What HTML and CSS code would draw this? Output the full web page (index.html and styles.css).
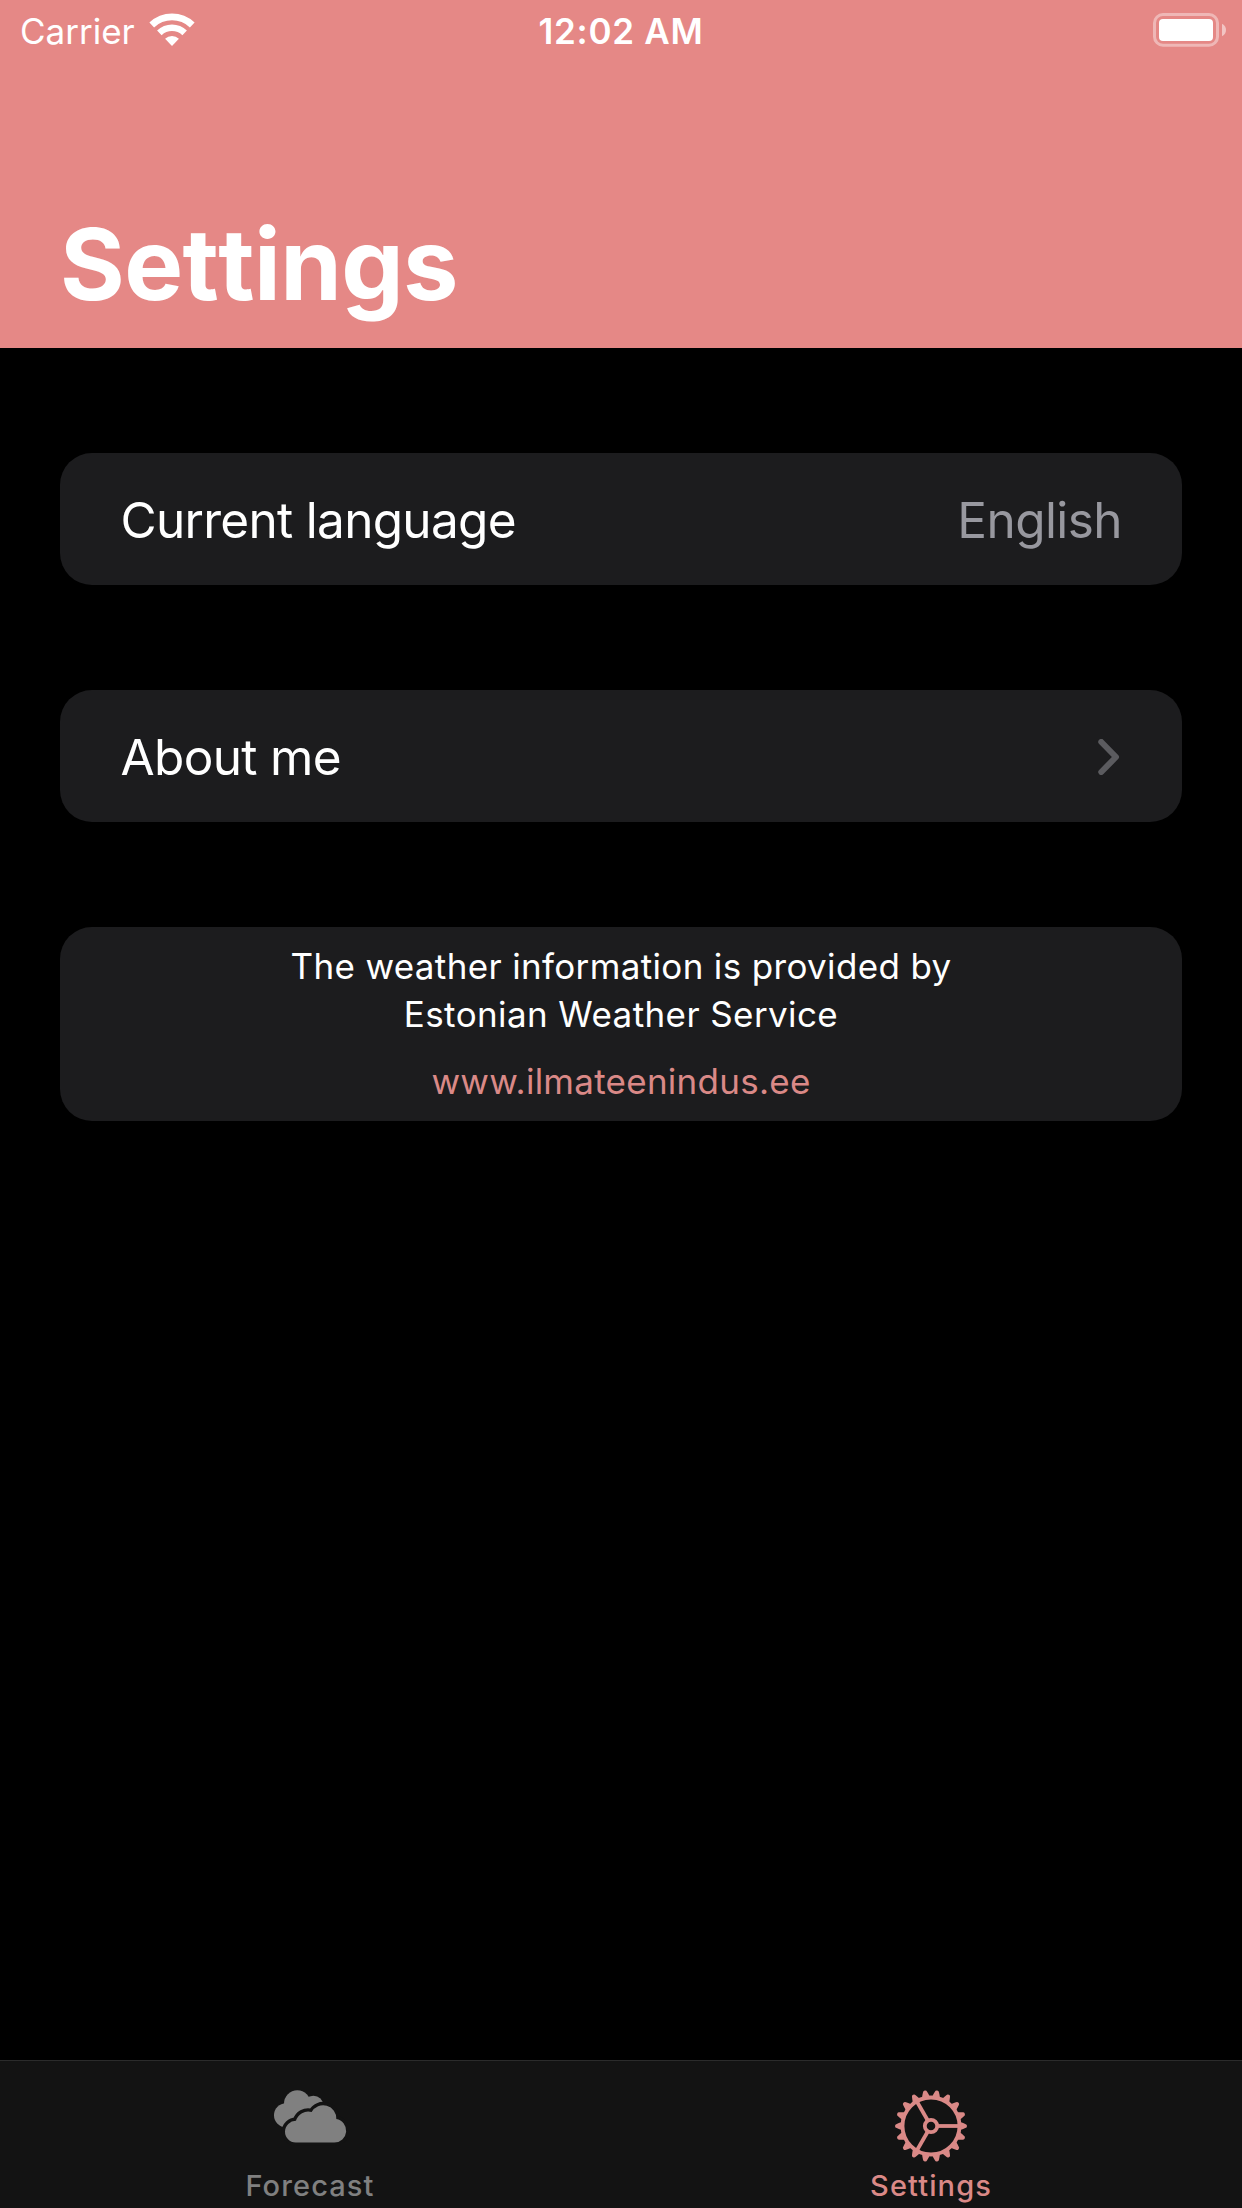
FILE: index.html
```
<!DOCTYPE html>
<html lang="en">
<head>
<meta charset="utf-8">
<title>Settings</title>
<link rel="stylesheet" href="styles.css">
</head>
<body>
<div class="screen">
  <header class="header">
    <div class="status">
      <div class="status-left">
        <span class="carrier">Carrier</span>
        <svg class="wifi" width="48" height="36" viewBox="-24 -34 48 36" fill="#fff">
          <path d="M0 0L-6.9 -7.2A10 10 0 0 1 6.9 -7.2Z"/>
          <path d="M-14.9 -15.5A21.5 21.5 0 0 1 14.9 -15.5L10.4 -10.8A15 15 0 0 0 -10.4 -10.8Z"/>
          <path d="M-22.6 -23.4A32.5 32.5 0 0 1 22.6 -23.4L17.9 -18.5A25.7 25.7 0 0 0 -17.9 -18.5Z"/>
        </svg>
      </div>
      <span class="time">12:02 AM</span>
      <div class="status-right">
        <svg class="battery" width="74" height="34" viewBox="0 0 74 34">
          <rect x="1.5" y="1.5" width="63" height="30.7" rx="8.5" fill="none" stroke="#fff" stroke-opacity=".4" stroke-width="3"/>
          <rect x="6" y="6" width="54" height="22" rx="4" fill="#fff"/>
          <path d="M69 10.7C72 12 73 14.5 73 17S72 22 69 23.3Z" fill="#fff" fill-opacity=".5"/>
        </svg>
      </div>
    </div>
    <h1 class="title">Settings</h1>
  </header>

  <main class="content">
    <section class="card row">
      <span class="label label-language">Current language</span>
      <span class="value">English</span>
    </section>
    <section class="card row">
      <span class="label">About me</span>
      <svg class="chevron" width="22" height="36" viewBox="0 0 22 36" fill="none" stroke="#5b5b5f" stroke-width="6" stroke-linecap="round" stroke-linejoin="round">
        <path d="M3.3 3L18 18L3.3 33"/>
      </svg>
    </section>
    <section class="card credit">
      <p class="credit-first">The weather information is provided by</p>
      <p class="credit-second">Estonian Weather Service</p>
      <a class="link">www.ilmateenindus.ee</a>
    </section>
  </main>

  <nav class="tabs">
    <div class="tab">
      <svg class="tab-icon" width="76" height="76" viewBox="126 115 228 228">
        <g fill="#808080">
          <circle cx="168" cy="197" r="36"/>
          <circle cx="202" cy="162" r="40"/>
          <circle cx="250" cy="168" r="30"/>
          <path d="M168 233L250 190V160H190Z"/>
        </g>
        <path fill="#131313" stroke="#131313" stroke-width="20" d="M197 278A32 32 0 0 1 198 213.500A38 38 0 0 1 245 187A39.500 39.500 0 0 1 319 208A35.500 35.500 0 0 1 313 278.500Z"/>
        <path fill="#808080" d="M197 278.500A32 32 0 0 1 198 213.500A38 38 0 0 1 245 187A39.500 39.500 0 0 1 319 208A35.500 35.500 0 0 1 313 278.500Z"/>
      </svg>
      <span class="tab-label">Forecast</span>
    </div>
    <div class="tab active">
      <svg class="tab-icon" width="76" height="76" viewBox="-38 -38 76 76" fill="none" stroke="#da8987" stroke-width="3.800">
        <defs>
          <path id="tooth" d="M28.500 -4.200Q33 -2.800 34.300 -2.100Q36 -1.800 36 0Q36 1.800 34.300 2.100Q33 2.800 28.500 4.200Z" fill="#da8987" stroke="none"/>
          <g id="teeth"><use href="#tooth"/><use href="#tooth" transform="rotate(20)"/><use href="#tooth" transform="rotate(40)"/></g>
        </defs>
        <use href="#teeth"/>
        <use href="#teeth" transform="rotate(60)"/>
        <use href="#teeth" transform="rotate(120)"/>
        <use href="#teeth" transform="rotate(180)"/>
        <use href="#teeth" transform="rotate(240)"/>
        <use href="#teeth" transform="rotate(300)"/>
        <circle r="28.500"/>
        <circle r="6.200"/>
        <path d="M7 0H28"/>
        <path d="M7 0H28" transform="rotate(120)"/>
        <path d="M7 0H28" transform="rotate(240)"/>
      </svg>
      <span class="tab-label">Settings</span>
    </div>
  </nav>
</div>
</body>
</html>
```
FILE: styles.css
```
* { box-sizing: border-box; }

body {
  margin: 0;
  background: #000;
  color: #fff;
  font-family: Inter, "Liberation Sans", sans-serif;
}

.screen {
  display: flex;
  flex-direction: column;
  width: 1242px;
  height: 2208px;
}

.header {
  flex: none;
  height: 348px;
  background: #e58886;
}

.status {
  display: grid;
  grid-template-columns: 1fr auto 1fr;
  align-items: center;
  height: 62px;
  padding: 0 15px 0 20px;
  font-size: 35px;
  line-height: 62px;
}

.status-left {
  display: flex;
  align-items: flex-start;
  gap: 13px;
}

.wifi { margin-top: 12px; }

.time {
  margin: 0 5px 0 0;
  font-weight: 600;
  letter-spacing: 0.72px;
}

.status-right {
  display: flex;
  justify-content: flex-end;
  height: 62px;
  padding-top: 13px;
}

.title {
  margin: 142px 0 0;
  padding-left: 60px;
  font-size: 99px;
  font-weight: 700;
  font-kerning: none;
  line-height: 120px;
  letter-spacing: -0.6px;
}

.content {
  flex: 1;
  display: flex;
  flex-direction: column;
  gap: 105px;
  padding: 105px 60px 0;
}

.card {
  border-radius: 32px;
  background: #1c1c1e;
}

.row {
  display: flex;
  align-items: center;
  justify-content: space-between;
  height: 132px;
  padding: 0 62px 0 60.5px;
  font-size: 49.5px;
  line-height: 60px;
}

.label {
  padding-top: 2px;
  letter-spacing: -0.66px;
}

.label-language { letter-spacing: -0.7px; }

.value {
  margin-right: -2px;
  padding-top: 2px;
  color: #98989f;
  letter-spacing: -0.58px;
}

.chevron { margin-top: 1px; }

.credit {
  height: 194px;
  padding-top: 15px;
  font-size: 35px;
  line-height: 48px;
  text-align: center;
}

.credit p { margin: 0; }
.credit-first { letter-spacing: 0.346px; }
.credit-second { letter-spacing: 0.4px; }

.link {
  display: block;
  margin-top: 19px;
  color: #da8987;
  letter-spacing: 0.26px;
}

.tabs {
  flex: none;
  display: grid;
  grid-template-columns: 1fr 1fr;
  height: 148px;
  border-top: 1px solid #2b2b2b;
  background: #131313;
}

.tab {
  display: flex;
  flex-direction: column;
  align-items: center;
  padding: 27px 1px 0 0;
  color: #808080;
}

.active { color: #da8987; }

.tab-icon { margin-right: 1px; }

.tab-label {
  margin-top: 4px;
  font-size: 29px;
  font-weight: 500;
  line-height: 36px;
  letter-spacing: 1.1px;
}
```
